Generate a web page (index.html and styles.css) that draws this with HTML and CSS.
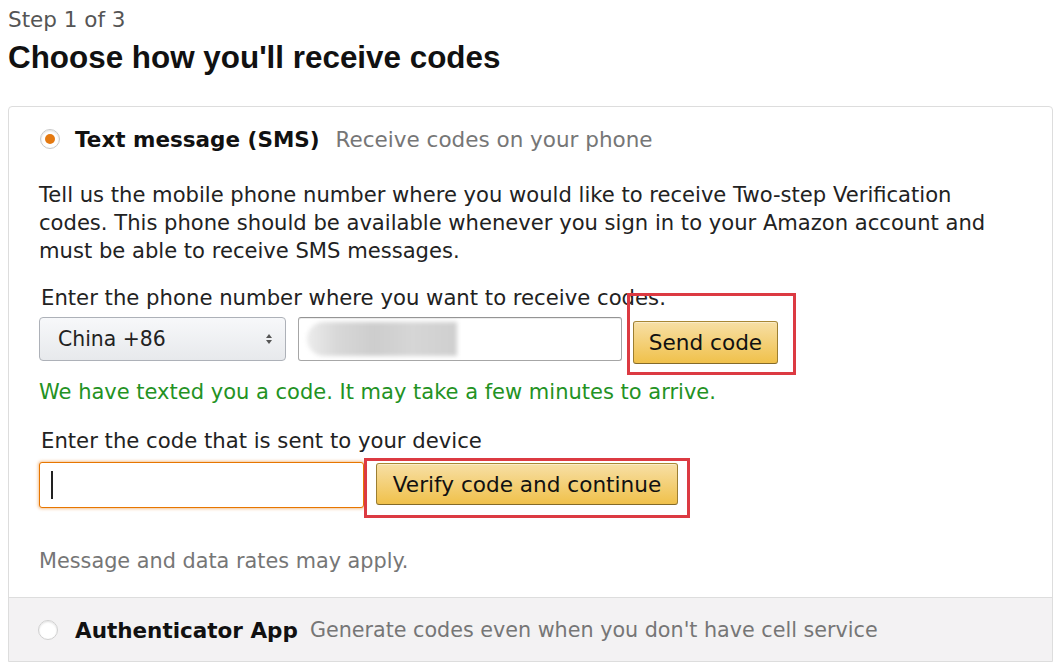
FILE: index.html
```html
<!DOCTYPE html>
<html>
<head>
<meta charset="utf-8">
<link rel="stylesheet" href="styles.css">
</head>
<body>
<div class="page">
  <div class="step">Step 1 of 3</div>
  <h1 class="title">Choose how you'll receive codes</h1>

  <div class="card">
    <div class="option active">
      <div class="option-head">
        <span class="radio checked"><span class="dot"></span></span>
        <span class="opt-title">Text message (SMS)</span>
        <span class="opt-sub">Receive codes on your phone</span>
      </div>
      <p class="desc">Tell us the mobile phone number where you would like to receive Two-step Verification codes. This phone should be available whenever you sign in to your Amazon account and must be able to receive SMS messages.</p>

      <div class="label">Enter the phone number where you want to receive codes.</div>
      <div class="row">
        <div class="select">
          <span>China +86</span>
          <svg class="arrows" width="8" height="12" viewBox="0 0 8 12"><path d="M4 1 L7 5 L1 5 Z M4 11 L7 7 L1 7 Z" fill="#555"/></svg>
        </div>
        <div class="input phone"><span class="blur"></span></div>
        <div class="hl hl-send"><button class="btn send">Send code</button></div>
      </div>
      <div class="success">We have texted you a code. It may take a few minutes to arrive.</div>

      <div class="label label2">Enter the code that is sent to your device</div>
      <div class="row row2">
        <div class="input code"><span class="caret"></span></div>
        <div class="hl hl-verify"><button class="btn verify">Verify code and continue</button></div>
      </div>

      <div class="note">Message and data rates may apply.</div>
    </div>
    <div class="option alt">
      <div class="option-head">
        <span class="radio"></span>
        <span class="opt-title">Authenticator App</span>
        <span class="opt-sub">Generate codes even when you don't have cell service</span>
      </div>
    </div>
  </div>
</div>
</body>
</html>
```

FILE: styles.css
```css
* { box-sizing: border-box; }
html, body { margin: 0; padding: 0; background: #fff; }
body {
  font-family: "DejaVu Sans", Verdana, sans-serif;
  color: #111;
}
.page { padding: 8px 5px 0 8px; }
.step {
  font-size: 21.5px;
  color: #555;
  line-height: 24px;
}
.title {
  margin: 8px 0 0 0;
  font-family: "Liberation Sans", Arial, sans-serif;
  font-size: 31.4px;
  line-height: 36px;
  font-weight: bold;
  color: #111;
}
.card {
  margin-top: 30px;
  border: 1px solid #dddddd;
  border-radius: 4px 4px 0 0;
}
.option.active { padding: 20px 30px 24px 30px; }
.option-head {
  display: flex;
  align-items: center;
  height: 24px;
  white-space: nowrap;
}
.radio {
  width: 20px;
  height: 20px;
  flex: none;
  border-radius: 50%;
  border: 1px solid #c8c8c8;
  background: #fff;
  display: flex;
  align-items: center;
  justify-content: center;
  margin-left: 1px;
  margin-right: 15px;
  box-shadow: inset 0 1px 2px rgba(0,0,0,0.12);
}
.radio .dot {
  width: 10px;
  height: 10px;
  border-radius: 50%;
  background: #e47911;
}
.opt-title {
  font-size: 21.5px;
  font-weight: bold;
  color: #111;
  margin-right: 16px;
}
.opt-sub {
  font-size: 21.5px;
  color: #767676;
}
.desc {
  margin: 30px 0 0 0;
  font-size: 21.1px;
  line-height: 28px;
  color: #222;
  max-width: 955px;
}
.label {
  margin-top: 20px;
  font-size: 21.2px;
  line-height: 26px;
  padding-left: 2px;
  color: #222;
}
.row {
  display: flex;
  align-items: center;
  margin-top: 6px;
}
.select {
  width: 247px;
  height: 44px;
  border: 1px solid #adb1b8;
  border-radius: 4px;
  background: linear-gradient(#f7f8fa, #e7e9ec);
  display: flex;
  align-items: center;
  justify-content: space-between;
  padding: 0 12px 0 18px;
  font-size: 20.4px;
  color: #222;
}
.input {
  height: 44px;
  border: 1px solid #a6a6a6;
  border-top-color: #949494;
  border-radius: 3px;
  background: #fff;
  box-shadow: inset 0 1px 0 rgba(0,0,0,0.07);
}
.phone {
  width: 324px;
  margin-left: 12px;
  display: flex;
  align-items: center;
  padding-left: 8px;
}
.blur {
  display: block;
  width: 150px;
  height: 34px;
  border-radius: 17px 0 0 17px;
  background: linear-gradient(90deg, #ececec 0%, #d8d8d8 20%, #cdcdcd 45%, #d6d6d6 70%, #cfcfcf 100%);
  filter: blur(2px);
}
.hl {
  border: 3px solid #dc3a42;
  display: flex;
}
.hl-send {
  margin-left: 5px;
  margin-top: -25px;
  margin-bottom: -14px;
  width: 169px;
  height: 82px;
  padding: 25px 0 0 3px;
  align-items: flex-start;
}
.btn {
  font-family: inherit;
  font-size: 21.6px;
  color: #111;
  border: 1px solid #a88734;
  border-color: #a88734 #9c7e31 #846a29;
  border-radius: 3px;
  background: linear-gradient(#f7dfa5, #f0c14b);
  box-shadow: inset 0 1px 0 rgba(255,255,255,0.4);
  padding: 0;
}
.send {
  width: 145px;
  height: 43px;
}
.success {
  margin-top: 18px;
  font-size: 21px;
  line-height: 26px;
  color: #239223;
}
.label2 { margin-top: 23px; }
.row2 { margin-top: 8px; }
.code {
  width: 325px;
  height: 46px;
  border: 1px solid #e77600;
  box-shadow: 0 0 3px 1px rgba(228,121,17,0.45);
  display: flex;
  align-items: center;
  padding-left: 11px;
}
.caret {
  width: 2px;
  height: 28px;
  background: #222;
}
.hl-verify {
  width: 326px;
  height: 60px;
  padding: 2px 0 0 9px;
  align-self: flex-start;
  margin-top: -4px;
  margin-bottom: -10px;
}
.verify {
  width: 302px;
  height: 42px;
}
.note {
  margin-top: 41px;
  font-size: 20.8px;
  line-height: 24px;
  color: #767676;
}
.option.alt {
  background: #f3f2f3;
  border-top: 1px solid #dddddd;
  padding: 20px 30px 18px 30px;
  height: 64px;
}
.option.alt .radio {
  margin-left: -1px;
  margin-right: 17px;
  border-color: #d0d0d0;
}
.option.alt .opt-title { margin-right: 12px; }
.option.alt .opt-sub { font-size: 20.7px; }
```
